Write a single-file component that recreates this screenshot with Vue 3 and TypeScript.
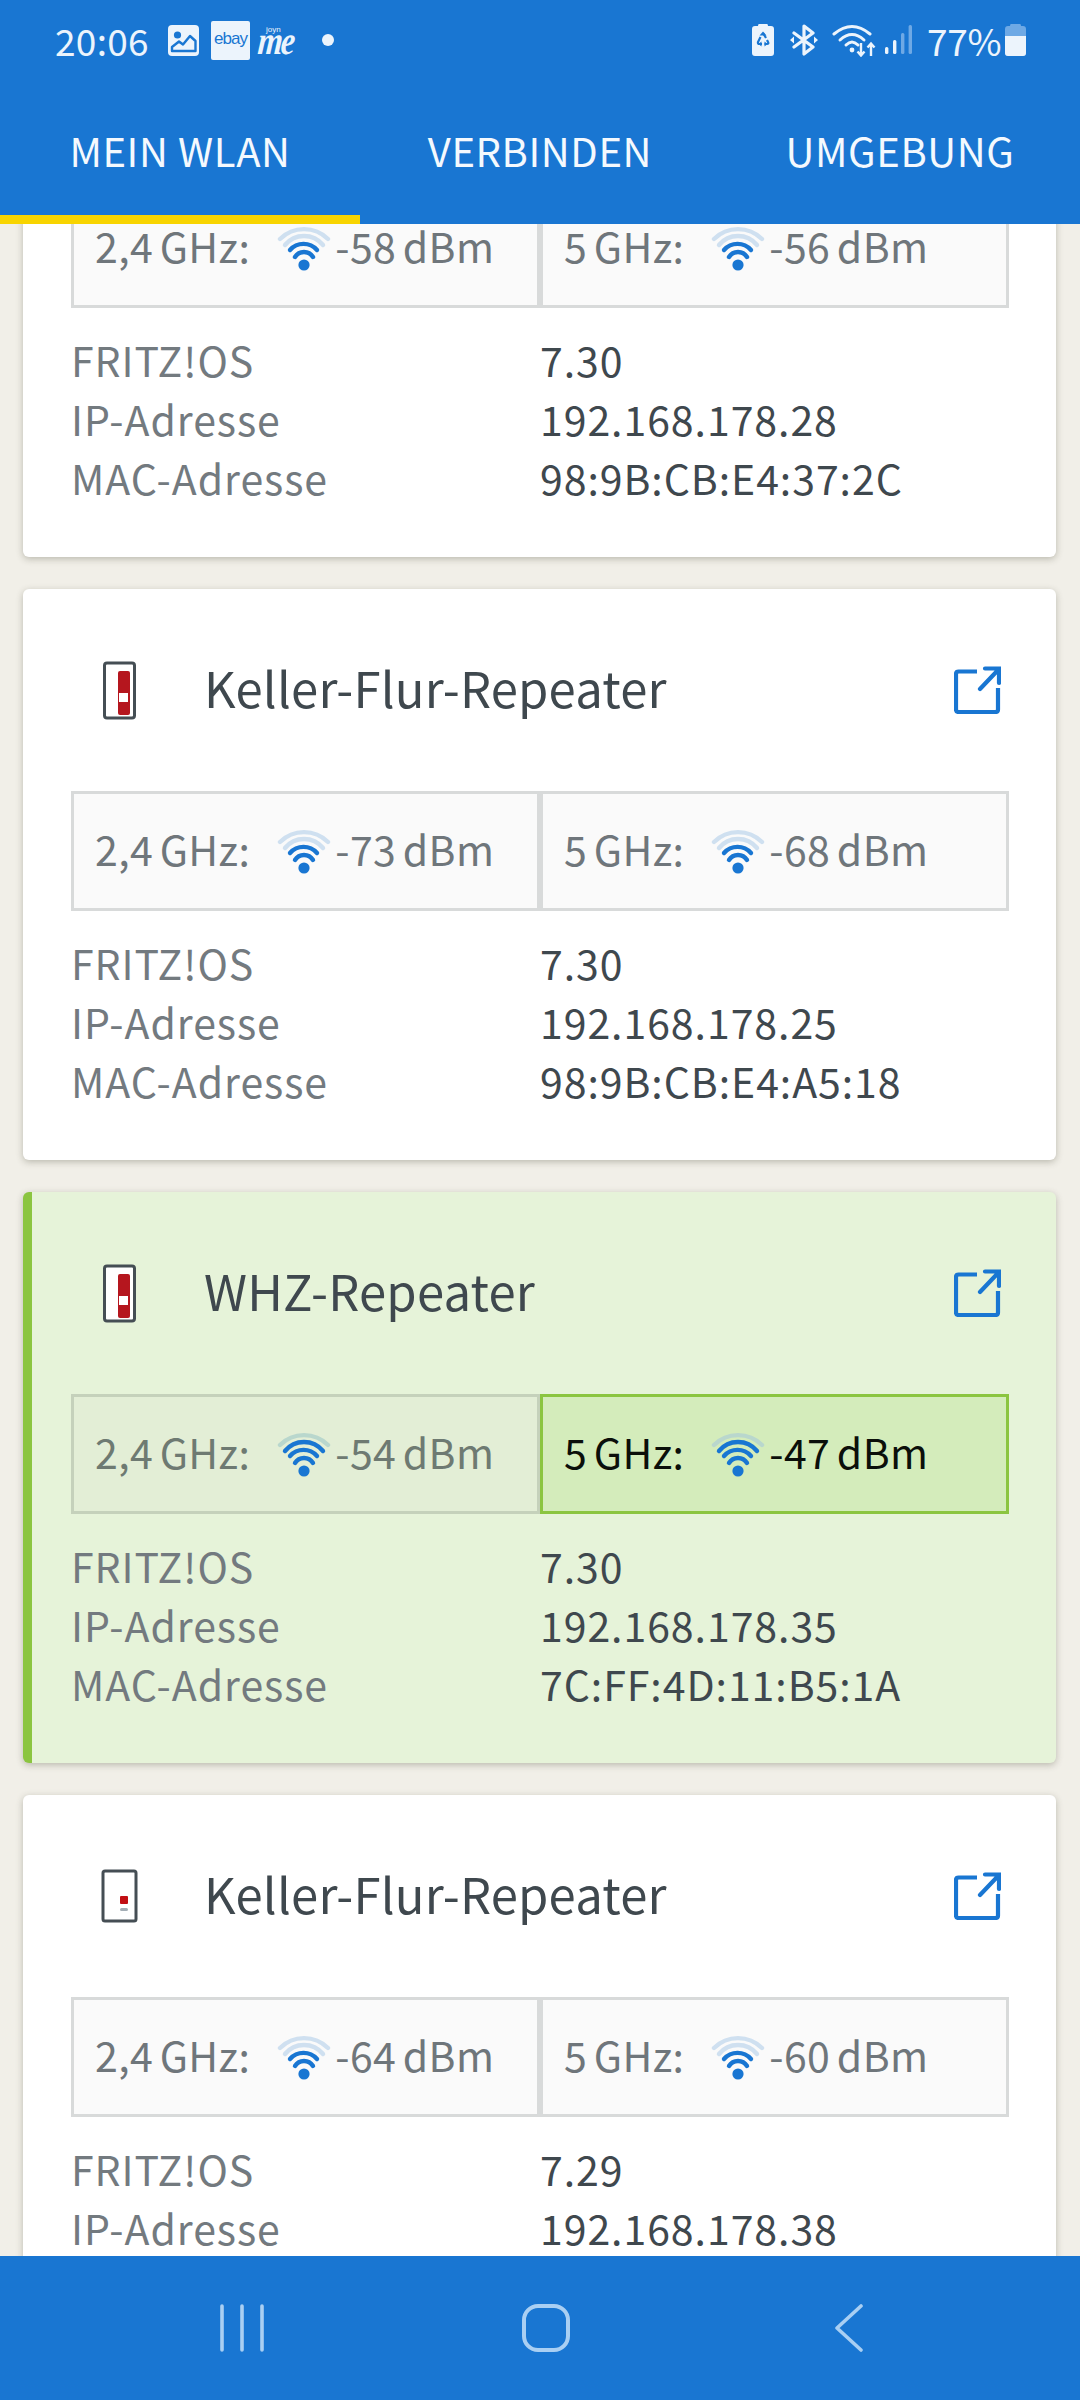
<script setup lang="ts">
interface Pill { label: string; value: string; bars: number; on?: boolean }
interface Card { name: string; icon: 'bar' | 'dot'; active?: boolean; pills: Pill[]; os: string; ip: string; mac: string }

const tabs = ['MEIN WLAN', 'VERBINDEN', 'UMGEBUNG']

const cards: Card[] = [
  { name: 'Keller-Repeater', icon: 'bar', pills: [{ label: '2,4 GHz:', value: '-58 dBm', bars: 2 }, { label: '5 GHz:', value: '-56 dBm', bars: 2 }], os: '7.30', ip: '192.168.178.28', mac: '98:9B:CB:E4:37:2C' },
  { name: 'Keller-Flur-Repeater', icon: 'bar', pills: [{ label: '2,4 GHz:', value: '-73 dBm', bars: 2 }, { label: '5 GHz:', value: '-68 dBm', bars: 2 }], os: '7.30', ip: '192.168.178.25', mac: '98:9B:CB:E4:A5:18' },
  { name: 'WHZ-Repeater', icon: 'bar', active: true, pills: [{ label: '2,4 GHz:', value: '-54 dBm', bars: 3 }, { label: '5 GHz:', value: '-47 dBm', bars: 3, on: true }], os: '7.30', ip: '192.168.178.35', mac: '7C:FF:4D:11:B5:1A' },
  { name: 'Keller-Flur-Repeater', icon: 'dot', pills: [{ label: '2,4 GHz:', value: '-64 dBm', bars: 2 }, { label: '5 GHz:', value: '-60 dBm', bars: 2 }], os: '7.29', ip: '192.168.178.38', mac: '98:9B:CB:E4:A5:20' }
]
</script>

<template>
  <div class="phone">
    <header class="top">
      <div class="status">
        <span class="time">20:06</span>
        <svg class="s-img" viewBox="0 0 31 31">
          <rect width="31" height="31" rx="4" fill="#ecf4fc" />
          <circle cx="9.5" cy="10" r="3.6" fill="#1976d2" />
          <path d="M4 26V22L11 16.5L15 19.5L22 11L27.5 16V26Z" fill="none" stroke="#1976d2" stroke-width="2.4" stroke-linejoin="round" />
        </svg>
        <span class="ebay">ebay</span>
        <span class="joyn"><small>joyn</small><i>me</i></span>
        <span class="dot"></span>
        <span class="grow"></span>
        <svg class="s-save" viewBox="0 0 22 32">
          <path d="M7 0H15Q16 0 16 2H19Q22 2 22 5V29Q22 32 19 32H3Q0 32 0 29V5Q0 2 3 2H6Q6 0 7 0Z" fill="#ecf4fc" />
          <path d="M11 9L14 14M8.5 13L6 18Q5.6 20 7.5 20H10M12.5 20H15Q17 20 16 18L15 16" fill="none" stroke="#1976d2" stroke-width="2.2" />
          <path d="M11 7.5L14.5 11.5H7.5ZM9.5 17.5V22.5L6.5 20ZM12.5 17.5L15.5 20L12.5 22.5Z" fill="#1976d2" />
        </svg>
        <svg class="s-bt" viewBox="0 0 28 32">
          <path d="M4 9L23 23L14 30V2L23 9L4 23" fill="none" stroke="#ecf4fc" stroke-width="3.2" stroke-linejoin="round" stroke-linecap="round" />
          <path d="M0 16L4 12.5V19.5ZM28 16L24 12.5V19.5Z" fill="#ecf4fc" />
        </svg>
        <svg class="s-wifi" viewBox="0 0 44 34">
          <path d="M2 11Q20 -4 38 11" fill="none" stroke="#ecf4fc" stroke-width="3" stroke-linecap="round" />
          <path d="M8 17Q20 6 32 17" fill="none" stroke="#ecf4fc" stroke-width="3" stroke-linecap="round" />
          <path d="M14 22Q20 16 26 22" fill="none" stroke="#ecf4fc" stroke-width="3" stroke-linecap="round" />
          <circle cx="20" cy="27" r="2.4" fill="#ecf4fc" />
          <path d="M29 20V32M25.5 28.5L29 32.5L32.5 28.5M39 33V21M35.5 24.5L39 20.5L42.5 24.5" fill="none" stroke="#ecf4fc" stroke-width="2.4" />
        </svg>
        <svg class="s-sig" viewBox="0 0 27 30">
          <rect x="0" y="22" width="3.4" height="7" rx="1.5" fill="#ecf4fc" />
          <rect x="8" y="15" width="3.4" height="14" rx="1.5" fill="#ecf4fc" />
          <rect x="16" y="8" width="3.4" height="21" rx="1.5" fill="#6ea9e5" />
          <rect x="23.6" y="0" width="3.4" height="29" rx="1.5" fill="#6ea9e5" />
        </svg>
        <span class="pct">77%</span>
        <svg class="s-bat" viewBox="0 0 21 32">
          <path d="M6 0H15Q16 0 16 2H18Q21 2 21 5V29Q21 32 18 32H3Q0 32 0 29V5Q0 2 3 2H5Q5 0 6 0Z" fill="#6ea9e5" />
          <path d="M0 12H21V29Q21 32 18 32H3Q0 32 0 29Z" fill="#ecf4fc" />
        </svg>
      </div>
      <nav class="tabs">
        <div v-for="(t, i) in tabs" :key="t" class="tab" :class="{ sel: i === 0 }">{{ t }}</div>
      </nav>
    </header>

    <main class="view">
      <div class="list">
        <section v-for="(c, ci) in cards" :key="ci" class="card" :class="{ active: c.active }">
          <div class="head">
            <svg v-if="c.icon === 'bar'" class="dev" viewBox="0 0 40 62">
              <rect x="3.5" y="4" width="30" height="55" rx="2.5" fill="#fff" stroke="#454e54" stroke-width="3" />
              <rect x="17" y="12" width="12" height="44" rx="2" fill="#b5161e" />
              <rect x="18" y="34" width="9" height="9" fill="#fff" />
            </svg>
            <svg v-else class="dev" viewBox="0 0 40 62">
              <rect x="2" y="6" width="33" height="50" rx="2" fill="#fff" stroke="#454e54" stroke-width="3" />
              <rect x="19" y="31" width="8" height="8" rx="1" fill="#c20f14" />
              <rect x="19" y="43" width="8" height="3" rx="1.5" fill="#a3adb5" />
            </svg>
            <h2 class="name">{{ c.name }}</h2>
            <svg class="ext" viewBox="0 0 47 48">
              <path d="M23 5.500H4.500Q2 5.500 2 8V43.500Q2 46 4.500 46H41.500Q44 46 44 43.500V22" fill="none" stroke="#1976d2" stroke-width="4.200" />
              <path d="M26 23L45 3M31 2.500H45V17" fill="none" stroke="#1976d2" stroke-width="4.200" stroke-linecap="round" />
            </svg>
          </div>
          <div class="pills">
            <div v-for="p in c.pills" :key="p.label" class="pill" :class="{ on: p.on }">
              <span class="plabel">{{ p.label }}</span>
              <svg class="wifi" viewBox="0 0 54 46">
                <path d="M3 14A34 34 0 0 1 51 14" :class="p.bars >= 4 ? 'lit' : 'dim'" />
                <path d="M8 20A24.500 24.500 0 0 1 46 20" :class="p.bars >= 3 ? 'lit' : 'dim'" />
                <path d="M13 25A18 18 0 0 1 40 25" class="lit" />
                <path d="M18 32A10.600 10.600 0 0 1 36 32" class="lit" />
                <circle cx="27" cy="40" r="5.600" fill="#1976d2" />
              </svg>
              <span class="pvalue">{{ p.value }}</span>
            </div>
          </div>
          <dl class="facts">
            <dt>FRITZ!OS</dt><dd>{{ c.os }}</dd>
            <dt>IP-Adresse</dt><dd>{{ c.ip }}</dd>
            <dt>MAC-Adresse</dt><dd>{{ c.mac }}</dd>
          </dl>
        </section>
      </div>
    </main>

    <footer class="bottom">
      <svg class="b-recent" viewBox="0 0 44 48">
        <path d="M2 2V46M22 2V46M42 2V46" stroke="#a9cff3" stroke-width="3.600" stroke-linecap="round" fill="none" />
      </svg>
      <svg class="b-home" viewBox="0 0 48 48">
        <rect x="2" y="2" width="44" height="44" rx="14" fill="none" stroke="#a9cff3" stroke-width="4" />
      </svg>
      <svg class="b-back" viewBox="0 0 28 48">
        <path d="M26 2L2 24L26 46" fill="none" stroke="#a9cff3" stroke-width="3.600" stroke-linecap="round" stroke-linejoin="round" />
      </svg>
    </footer>
  </div>
</template>

<style>
html, body { margin: 0; background: #f1efe8; }
</style>

<style scoped>
.phone {
  width: 1080px;
  height: 2400px;
  display: flex;
  flex-direction: column;
  overflow: hidden;
  background: #f1efe8;
  font-family: "Noto Sans CJK JP", "Noto Sans", sans-serif;
}
.top {
  flex: none;
  height: 224px;
  background: #1976d2;
  position: relative;
  z-index: 2;
}
.status {
  height: 80px;
  display: flex;
  align-items: center;
  padding: 0 54px 0 55px;
  color: #ecf4fc;
}
.time { font-size: 37px; line-height: 44px; width: 95px; letter-spacing: 0.3px; }
.s-img { width: 31px; height: 31px; margin-left: 18px; }
.ebay {
  width: 39px; height: 39px; margin-left: 12px; background: #ecf4fc; border-radius: 2px;
  color: #1976d2; font: 17px/36px "Liberation Sans", sans-serif; letter-spacing: -1px; text-align: center;
}
.joyn { position: relative; width: 38px; height: 30px; margin-left: 8px; }
.joyn i {
  position: absolute; left: -1px; bottom: 0; font: italic 700 32px/24px "Liberation Serif", serif;
  letter-spacing: -2px; transform: scaleY(1.25) skewX(-6deg); transform-origin: bottom left;
}
.joyn small { position: absolute; left: 8px; top: 0; font: 8px/9px "Liberation Sans", sans-serif; }
.dot { width: 12px; height: 12px; border-radius: 50%; background: #ecf4fc; margin-left: 26px; }
.grow { flex: 1; }
.s-save { width: 22px; height: 32px; }
.s-bt { width: 28px; height: 32px; margin-left: 16px; }
.s-wifi { width: 44px; height: 34px; margin-left: 14px; }
.s-sig { width: 27px; height: 30px; margin-left: 9px; }
.pct { font-size: 37px; line-height: 44px; width: 70px; margin-left: 15px; letter-spacing: -0.3px; }
.s-bat { width: 21px; height: 32px; margin-left: 8px; }

.tabs { display: flex; height: 144px; }
.tab {
  width: 360px;
  height: 135px;
  padding-top: 4px;
  box-sizing: border-box;
  display: flex;
  align-items: center;
  justify-content: center;
  font-size: 40px;
  letter-spacing: 0.6px;
  color: #f4f9fe;
}
.tab.sel { height: 144px; border-bottom: 9px solid #f8d400; }

.view { flex: 1; min-height: 0; overflow: hidden; }
.list {
  margin-top: -238px;
  padding: 0 24px 0 23px;
  display: flex;
  flex-direction: column;
  gap: 32px;
}
.card {
  height: 571px;
  flex: none;
  box-sizing: border-box;
  padding: 0 47px 0 48px;
  background: #fff;
  border-radius: 6px;
  box-shadow: 0 2px 7px rgba(60, 60, 40, 0.3);
}
.card.active { background: #e6f3d9; border-left: 9px solid #8bc540; padding-left: 39px; }
.head { height: 202px; display: flex; align-items: center; }
.dev { width: 40px; height: 62px; margin-left: 30px; flex: none; }
.name {
  margin: 0 0 6px 63px;
  flex: 1;
  font-size: 49px;
  line-height: 60px;
  font-weight: 400;
  letter-spacing: 0.2px;
  color: #3f484e;
}
.ext { width: 47px; height: 48px; margin-right: 8px; flex: none; }

.pills { display: flex; height: 120px; }
.pill {
  width: 50%;
  box-sizing: border-box;
  display: flex;
  align-items: center;
  padding-left: 21px;
  border: 3px solid #d8dada;
  background: #fafafa;
  color: #6f767b;
  font-size: 41px;
  letter-spacing: 0.4px;
  word-spacing: -3px;
}
.card.active .pill { background: #e3eed6; border-color: #c5d1bb; color: #6e7a72; }
.card.active .pill.on { background: #d4ecbb; border-color: #8bc540; color: #0b0f0a; }
.plabel { line-height: 50px; margin-bottom: 6px; }
.pvalue { line-height: 50px; margin-left: 4px; margin-bottom: 6px; }
.wifi { width: 54px; height: 46px; margin-left: 27px; flex: none; }
.wifi path { fill: none; stroke-width: 4.4; stroke-linecap: round; }
.wifi .lit { stroke: #1976d2; }
.wifi .dim { stroke: #cfe0f0; }
.card.active .wifi .dim { stroke: #b9d7cd; }

.facts {
  margin: 22px 0 0;
  display: grid;
  grid-template-columns: 469px 1fr;
  grid-auto-rows: 59px;
  align-items: center;
  font-size: 41px;
  letter-spacing: 0.95px;
}
.facts dt { color: #737a7f; line-height: 59px; }
.facts dd { margin: 0; color: #3f484e; line-height: 59px; }

.bottom {
  flex: none;
  height: 144px;
  background: #1976d2;
  position: relative;
  z-index: 2;
  display: flex;
  align-items: center;
}
.b-recent { width: 44px; height: 48px; margin-left: 220px; }
.b-home { width: 48px; height: 48px; margin-left: 258px; }
.b-back { width: 28px; height: 48px; margin-left: 265px; }
</style>
